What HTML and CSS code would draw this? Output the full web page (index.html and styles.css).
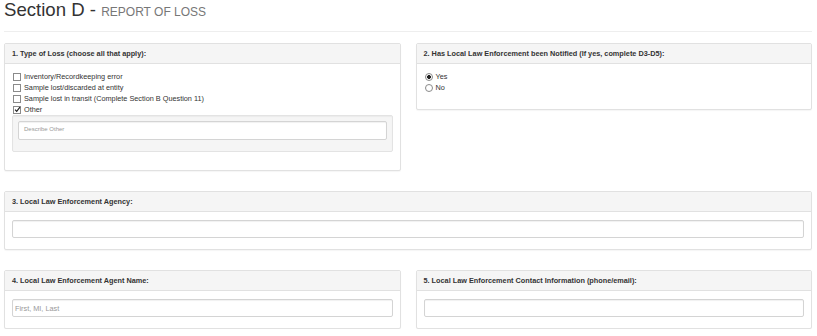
FILE: index.html
```html
<!DOCTYPE html>
<html lang="en">

<head>
    <meta charset="UTF-8">
    <meta name="viewport" content="width=device-width, initial-scale=1.0">
    <title>Section D - Report of Loss</title>
    <link rel="stylesheet" href="styles.css">
</head>

<body>
    <div class="page">
        <div class="page-header">
            <h1>Section D - <small>REPORT OF LOSS</small></h1>
        </div>

        <div class="row">
            <div class="panel">
                <div class="panel-heading">1. Type of Loss (choose all that apply):</div>
                <div class="panel-body">
                    <ul class="options">
                        <li><span class="box"></span>Inventory/Recordkeeping error</li>
                        <li><span class="box"></span>Sample lost/discarded at entity</li>
                        <li><span class="box"></span>Sample lost in transit (Complete Section B Question 11)</li>
                        <li>
                            <span class="box">
                                <svg viewBox="0 0 8 8" width="7" height="7">
                                    <polyline points="1.2,4.2 3.1,6.2 6.8,1.4" fill="none" stroke="#222" stroke-width="1.4" />
                                </svg>
                            </span>Other
                        </li>
                    </ul>
                    <div class="well">
                        <textarea class="input-sm" placeholder="Describe Other"></textarea>
                    </div>
                </div>
            </div>

            <div class="panel">
                <div class="panel-heading">2. Has Local Law Enforcement been Notified (If yes, complete D3-D5):</div>
                <div class="panel-body">
                    <ul class="options radios">
                        <li><span class="dot checked"></span>Yes</li>
                        <li><span class="dot"></span>No</li>
                    </ul>
                </div>
            </div>
        </div>

        <div class="row single">
            <div class="panel">
                <div class="panel-heading">3. Local Law Enforcement Agency:</div>
                <div class="panel-body">
                    <input type="text" class="field">
                </div>
            </div>
        </div>

        <div class="row">
            <div class="panel">
                <div class="panel-heading">4. Local Law Enforcement Agent Name:</div>
                <div class="panel-body">
                    <input type="text" class="field" placeholder="First, MI, Last">
                </div>
            </div>

            <div class="panel">
                <div class="panel-heading">5. Local Law Enforcement Contact Information (phone/email):</div>
                <div class="panel-body">
                    <input type="text" class="field">
                </div>
            </div>
        </div>
    </div>
</body>

</html>
```

FILE: styles.css
```css
body {
    margin: 0;
    font-family: 'Liberation Sans', Arial, sans-serif;
    font-size: 7.3px;
    color: #333;
    background-color: #fff;
}

.page {
    padding: 0 5px 0 4px;
}

.page-header {
    padding-bottom: 11px;
    margin-bottom: 11px;
    border-bottom: 1px solid #eee;
}

.page-header h1 {
    margin: 0;
    font-size: 18.6px;
    font-weight: normal;
    line-height: 1.1;
    color: #333;
}

.page-header small {
    font-size: 12px;
    color: #777;
}

.row {
    display: grid;
    grid-template-columns: 1fr 1fr;
    gap: 15px;
    align-items: start;
    margin-bottom: 20px;
}

.row:last-child {
    margin-bottom: 0;
}

.row.single {
    grid-template-columns: 1fr;
}

.panel {
    background-color: #fff;
    border: 1px solid #e1e1e1;
    border-radius: 2px;
    box-shadow: 0 1px 1px rgba(0, 0, 0, 0.04);
}

.panel-heading {
    height: 19px;
    line-height: 19px;
    padding: 0 7px;
    font-weight: bold;
    background-color: #f5f5f5;
    border-bottom: 1px solid #e1e1e1;
    border-radius: 2px 2px 0 0;
}

.panel-body {
    padding: 8px 7px 11px;
}

.options {
    list-style: none;
    margin: -1px 0 0;
    padding: 0;
}

.options li {
    display: flex;
    align-items: center;
    height: 11px;
}

.radios {
    margin-bottom: 5px;
}

.box {
    display: flex;
    align-items: center;
    justify-content: center;
    width: 6px;
    height: 6px;
    margin: 0 3px 0 1px;
    border: 1px solid #8a8a8a;
    background-color: #fff;
}

.box svg {
    flex: none;
}

.dot {
    width: 6px;
    height: 6px;
    margin: 0 3px 0 1px;
    border: 1px solid #8a8a8a;
    border-radius: 50%;
    background-color: #fff;
    box-sizing: content-box;
}

.dot.checked {
    background: radial-gradient(circle, #222 0 1.7px, #fff 2.2px);
}

.well {
    margin: 0 0 7px;
    padding: 5px 5px 11px;
    background-color: #f5f5f5;
    border: 1px solid #e3e3e3;
    border-radius: 2px;
    box-shadow: inset 0 1px 1px rgba(0, 0, 0, 0.04);
}

.field,
.well textarea {
    display: block;
    width: 100%;
    box-sizing: border-box;
    margin: 0;
    font-family: 'Liberation Sans', Arial, sans-serif;
    color: #555;
    background-color: #fff;
    border: 1px solid #d4d4d4;
    border-radius: 2px;
    box-shadow: inset 0 1px 1px rgba(0, 0, 0, 0.06);
    outline: none;
}

.field {
    height: 18px;
    padding: 0 2px;
    font-size: 7.3px;
}

.well textarea {
    height: 19px;
    padding: 3px 5px 0;
    font-size: 6px;
    line-height: 8px;
    resize: none;
    overflow: hidden;
}

.field::placeholder,
.well textarea::placeholder {
    color: #999;
}
```
